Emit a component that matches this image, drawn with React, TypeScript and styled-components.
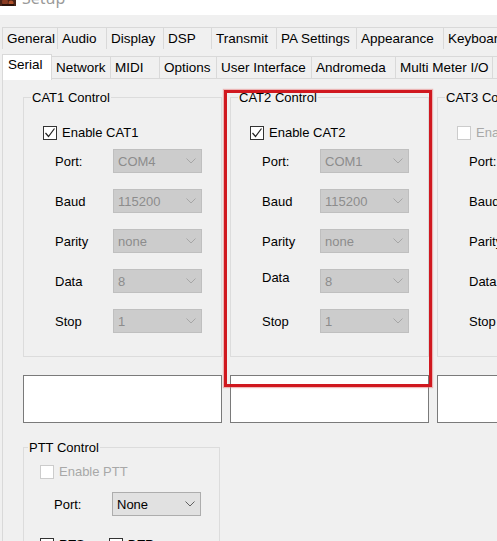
import styled, { createGlobalStyle } from "styled-components";

const GlobalStyle = createGlobalStyle`
  html, body {
    margin: 0;
    padding: 0;
    width: 497px;
    height: 541px;
    overflow: hidden;
    background: #f0f0f0;
  }
  body {
    font-family: "Liberation Sans", Arial, sans-serif;
    font-size: 13px;
    color: #000;
  }
`;

const Window = styled.div`
  position: relative;
  width: 497px;
  height: 541px;
  display: flex;
  flex-direction: column;
  background: #f0f0f0;
  overflow: hidden;
`;

const TitleBar = styled.div`
  height: 15px;
  flex: none;
  background: #fff;
  display: flex;
  align-items: flex-start;
  overflow: hidden;
`;

const TitleInner = styled.div`
  display: flex;
  align-items: center;
  gap: 6px;
  margin-top: -12px;
`;

const TitleText = styled.span`
  font-family: "Noto Sans", "Liberation Sans", sans-serif;
  font-size: 16px;
  color: #9a9a9a;
  line-height: 20px;
`;

const TabArea = styled.div`
  padding: 12px 0 0 2px;
  display: flex;
  flex-direction: column;
  flex: 1;
  min-height: 0;
`;

const TabRow = styled.div<{ $lower?: boolean }>`
  display: flex;
  align-items: flex-end;
  height: ${(p) => (p.$lower ? "24px" : "22px")};
  margin-top: ${(p) => (p.$lower ? "5px" : "0")};
  position: relative;
  z-index: 2;
  white-space: nowrap;
`;

const Tab = styled.div<{ $w: number; $active?: boolean; $first?: boolean }>`
  flex: none;
  box-sizing: border-box;
  width: ${(p) => p.$w}px;
  height: ${(p) => (p.$active ? "26px" : "22px")};
  margin-bottom: ${(p) => (p.$active ? "-2px" : "0")};
  padding-left: ${(p) => (p.$active ? "5px" : "4px")};
  display: flex;
  align-items: ${(p) => (p.$active ? "flex-start" : "center")};
  padding-top: ${(p) => (p.$active ? "2px" : "0")};
  border-top: 1px solid #d9d9d9;
  border-right: 1px solid #d9d9d9;
  border-left: ${(p) => (p.$first || p.$active ? "1px solid #d9d9d9" : "none")};
  background: ${(p) => (p.$active ? "#fff" : "#f0f0f0")};
  font-size: 13.5px;
  line-height: 16px;
`;

const Panel = styled.div`
  flex: 1;
  border-top: 1px solid #d9d9d9;
  border-left: 1px solid #d9d9d9;
  background: #f0f0f0;
  padding: 11px 0 0 20px;
  display: flex;
  flex-direction: column;
`;

const GroupRow = styled.div`
  display: flex;
  gap: 8px;
`;

const Group = styled.fieldset<{ $w: number; $pb: number }>`
  flex: none;
  box-sizing: border-box;
  width: ${(p) => p.$w}px;
  margin: 0;
  padding: 0 0 ${(p) => p.$pb}px 0;
  min-width: 0;
  border: 1px solid #dcdcdc;
`;

const Legend = styled.legend<{ $indent: number }>`
  margin-left: ${(p) => p.$indent}px;
  padding: 0 1px;
  font-size: 13px;
  line-height: 15px;
  white-space: nowrap;
`;

const CheckRow = styled.label<{ $top: number; $left: number }>`
  display: flex;
  align-items: center;
  gap: 5px;
  height: 15px;
  margin: ${(p) => p.$top}px 0 0 ${(p) => p.$left}px;
  white-space: nowrap;
`;

const Box = styled.span<{ $disabled?: boolean }>`
  flex: none;
  box-sizing: border-box;
  width: 14px;
  height: 14px;
  border: 1px solid ${(p) => (p.$disabled ? "#cccccc" : "#333")};
  background: #fff;
  display: flex;
  align-items: center;
  justify-content: center;
`;

const CheckText = styled.span<{ $disabled?: boolean }>`
  color: ${(p) => (p.$disabled ? "#a8a8a8" : "#000")};
  font-size: 13px;
`;

const FieldRow = styled.div<{ $top: number; $left: number }>`
  display: flex;
  align-items: center;
  height: 24px;
  margin: ${(p) => p.$top}px 0 0 ${(p) => p.$left}px;
`;

const FieldLabel = styled.span<{ $w: number; $raised?: boolean }>`
  flex: none;
  width: ${(p) => p.$w}px;
  margin-bottom: ${(p) => (p.$raised ? "8px" : "0")};
  white-space: nowrap;
`;

const Combo = styled.div<{ $disabled?: boolean }>`
  flex: none;
  box-sizing: border-box;
  width: 89px;
  height: 24px;
  padding: 0 5px 0 4px;
  display: flex;
  align-items: center;
  justify-content: space-between;
  background: ${(p) => (p.$disabled ? "#cccccc" : "#e1e1e1")};
  border: 1px solid ${(p) => (p.$disabled ? "#bfbfbf" : "#adadad")};
  color: ${(p) => (p.$disabled ? "#8c8c8c" : "#000")};
  white-space: nowrap;
`;

const WhiteBoxRow = styled.div`
  display: flex;
  gap: 8px;
  margin-top: 18px;
`;

const WhiteBox = styled.div`
  flex: none;
  box-sizing: border-box;
  width: 199px;
  height: 48px;
  border: 1px solid #7a7a7a;
  background: #fff;
`;

const PttWrap = styled.div`
  margin-top: 17px;
`;

const BottomChecks = styled.div`
  display: flex;
  margin: 21px 0 0 16px;
  gap: 24px;
`;

const RedFrame = styled.div`
  position: absolute;
  left: 224px;
  top: 90px;
  width: 208px;
  height: 297px;
  box-sizing: border-box;
  border: 3px solid #d0181f;
  box-shadow: 0 0 1px 1px rgba(230, 120, 120, 0.5);
  pointer-events: none;
  z-index: 5;
`;

const AppIcon = () => (
  <svg width="16" height="16" viewBox="0 0 16 16">
    <rect x="0" y="0" width="16" height="16" fill="#4a2418" />
    <circle cx="5" cy="12" r="3" fill="#8a3b22" />
    <circle cx="11" cy="13" r="2.5" fill="#b0502a" />
    <rect x="2" y="14" width="12" height="2" fill="#2a120a" />
  </svg>
);

const Chevron = ({ disabled }: { disabled?: boolean }) => (
  <svg width="10" height="6" viewBox="0 0 10 6">
    <polyline points="0.5,0.5 5,5 9.5,0.5" fill="none" stroke={disabled ? "#a6a6a6" : "#606060"} strokeWidth="1" />
  </svg>
);

const Tick = () => (
  <svg width="12" height="12" viewBox="0 0 12 12">
    <polyline points="1.5,6 4.5,9.5 10.5,1.5" fill="none" stroke="#222" strokeWidth="1.2" />
  </svg>
);

const topTabs: [string, number][] = [
  ["General", 56],
  ["Audio", 49],
  ["Display", 57],
  ["DSP", 48],
  ["Transmit", 65],
  ["PA Settings", 80],
  ["Appearance", 87],
  ["Keyboard", 70],
];

const lowerTabs: [string, number][] = [
  ["Serial", 50],
  ["Network", 59],
  ["MIDI", 49],
  ["Options", 57],
  ["User Interface", 95],
  ["Andromeda", 84],
  ["Multi Meter I/O", 97],
  ["Expert", 60],
];

type Field = { label: string; value: string; raised?: boolean };

const catFields = (port: string, raiseData = false): Field[] => [
  { label: "Port:", value: port },
  { label: "Baud", value: "115200" },
  { label: "Parity", value: "none" },
  { label: "Data", value: "8", raised: raiseData },
  { label: "Stop", value: "1" },
];

type CatProps = { title: string; enabled: boolean; fields: Field[] };

const CatGroup = ({ title, enabled, fields }: CatProps) => (
  <Group $w={199} $pb={23}>
    <Legend $indent={7}>{title}</Legend>
    <CheckRow $top={20} $left={19}>
      <Box $disabled={!enabled}>{enabled && <Tick />}</Box>
      <CheckText $disabled={!enabled}>Enable {title.split(" ")[0]}</CheckText>
    </CheckRow>
    {fields.map((f, i) => (
      <FieldRow key={f.label} $top={i === 0 ? 9 : 16} $left={31}>
        <FieldLabel $w={58} $raised={f.raised}>
          {f.label}
        </FieldLabel>
        <Combo $disabled>
          <span>{f.value}</span>
          <Chevron disabled />
        </Combo>
      </FieldRow>
    ))}
  </Group>
);

export default function App() {
  return (
    <Window>
      <GlobalStyle />
      <TitleBar>
        <TitleInner>
          <AppIcon />
          <TitleText>Setup</TitleText>
        </TitleInner>
      </TitleBar>
      <TabArea>
        <TabRow>
          {topTabs.map(([name, w], i) => (
            <Tab key={name} $w={w} $first={i === 0}>
              {name}
            </Tab>
          ))}
        </TabRow>
        <TabRow $lower>
          {lowerTabs.map(([name, w], i) => (
            <Tab key={name} $w={w} $active={i === 0}>
              {name}
            </Tab>
          ))}
        </TabRow>
        <Panel>
          <GroupRow>
            <CatGroup title="CAT1 Control" enabled fields={catFields("COM4")} />
            <CatGroup title="CAT2 Control" enabled fields={catFields("COM1", true)} />
            <CatGroup title="CAT3 Control" enabled={false} fields={catFields("COM5")} />
          </GroupRow>
          <WhiteBoxRow>
            <WhiteBox />
            <WhiteBox />
            <WhiteBox />
          </WhiteBoxRow>
          <PttWrap>
            <Group $w={197} $pb={20}>
              <Legend $indent={4}>PTT Control</Legend>
              <CheckRow $top={9} $left={16}>
                <Box $disabled />
                <CheckText $disabled>Enable PTT</CheckText>
              </CheckRow>
              <FieldRow $top={13} $left={30}>
                <FieldLabel $w={58}>Port:</FieldLabel>
                <Combo>
                  <span>None</span>
                  <Chevron />
                </Combo>
              </FieldRow>
              <BottomChecks>
                <CheckRow $top={0} $left={0}>
                  <Box />
                  <CheckText>RTS</CheckText>
                </CheckRow>
                <CheckRow $top={0} $left={0}>
                  <Box />
                  <CheckText>DTR</CheckText>
                </CheckRow>
              </BottomChecks>
            </Group>
          </PttWrap>
        </Panel>
      </TabArea>
      <RedFrame />
    </Window>
  );
}
